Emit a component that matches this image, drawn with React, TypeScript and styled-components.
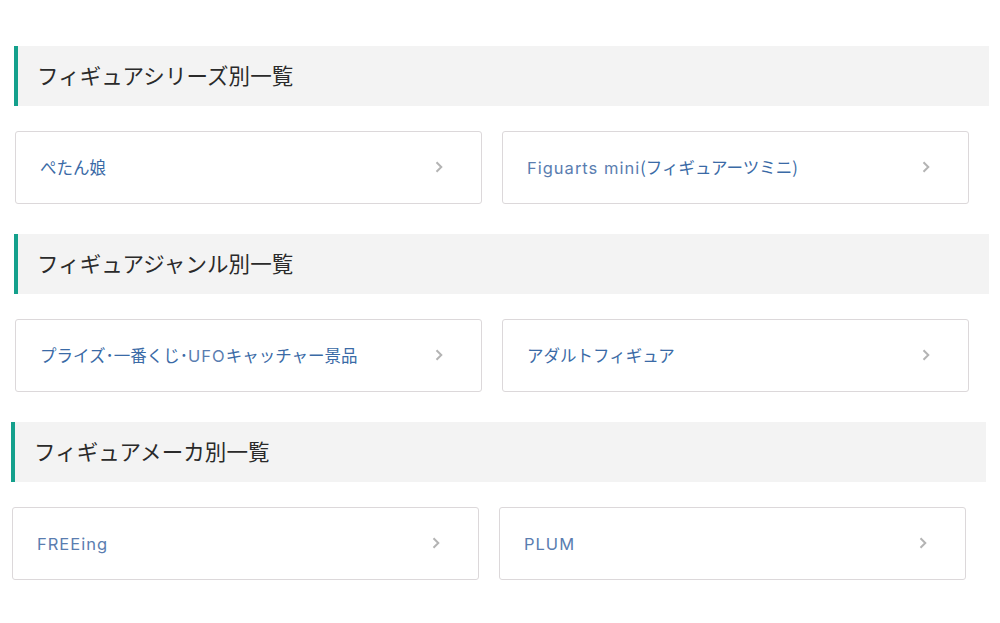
import React, { FC } from 'react';
import styled, { createGlobalStyle } from 'styled-components';

const GlobalStyle = createGlobalStyle`
  html, body {
    margin: 0;
    padding: 0;
    background: #fff;
  }
  body {
    font-family: 'Noto Sans', 'Noto Sans CJK JP', sans-serif;
  }
`;

const Page = styled.div`
  width: 1000px;
  box-sizing: border-box;
  padding: 46px 11px 0 14px;
  display: flex;
  flex-direction: column;
  gap: 30px;
`;

type SectionProps = {
  shift?: number;
};

const Section = styled.section<SectionProps>`
  display: flex;
  flex-direction: column;
  gap: 25px;
  margin-left: ${(props) => -(props.shift || 0)}px;
  margin-right: ${(props) => props.shift || 0}px;
`;

const Heading = styled.h2`
  margin: 0;
  height: 60px;
  box-sizing: border-box;
  display: flex;
  align-items: center;
  padding: 0 0 3px 19px;
  border-left: 4px solid #14a08c;
  background: #f3f3f3;
  color: #2a2a2a;
  font-family: 'Noto Sans CJK JP', sans-serif;
  font-size: 21.5px;
  font-weight: 400;
  letter-spacing: 0.1px;
`;

const Grid = styled.div`
  display: grid;
  grid-template-columns: 467px 467px;
  gap: 20px;
  padding-left: 1px;
`;

const Card = styled.a`
  height: 73px;
  box-sizing: border-box;
  display: flex;
  align-items: center;
  justify-content: space-between;
  padding: 0 38px 2px 24px;
  border: 1px solid #dcd8da;
  border-radius: 3px;
  text-decoration: none;
  color: #3a6aa6;
  font-family: 'Noto Sans CJK JP', sans-serif;
  font-size: 16.5px;
`;

const Latin = styled.span`
  font-family: 'Inter', 'Noto Sans', sans-serif;
  font-size: 16.5px;
  font-weight: 400;
  color: #5a7db0;
  letter-spacing: 1px;
`;

const Chevron: FC = () => (
  <svg width="8" height="12" viewBox="0 0 8 12" fill="none">
    <path d="M1.5 1.2 L6.3 6 L1.5 10.8" stroke="#b4b4b4" strokeWidth="2" strokeLinejoin="miter" />
  </svg>
);

type Item = { label: React.ReactNode };

const sections: { title: string; items: Item[]; shift?: number }[] = [
  {
    title: 'フィギュアシリーズ別一覧',
    items: [
      { label: 'ぺたん娘' },
      {
        label: (
          <>
            <Latin>Figuarts mini</Latin>(フィギュアーツミニ)
          </>
        ),
      },
    ],
  },
  {
    title: 'フィギュアジャンル別一覧',
    items: [
      {
        label: (
          <>
            プライズ･一番くじ･<Latin>UFO</Latin>キャッチャー景品
          </>
        ),
      },
      { label: 'アダルトフィギュア' },
    ],
  },
  {
    title: 'フィギュアメーカ別一覧',
    shift: 3,
    items: [{ label: <Latin>FREEing</Latin> }, { label: <Latin>PLUM</Latin> }],
  },
];

export default function App() {
  return (
    <>
      <GlobalStyle />
      <Page>
        {sections.map((s) => (
          <Section key={s.title} shift={s.shift}>
            <Heading>{s.title}</Heading>
            <Grid>
              {s.items.map((item, i) => (
                <Card key={i} href="#">
                  <span>{item.label}</span>
                  <Chevron />
                </Card>
              ))}
            </Grid>
          </Section>
        ))}
      </Page>
    </>
  );
}
